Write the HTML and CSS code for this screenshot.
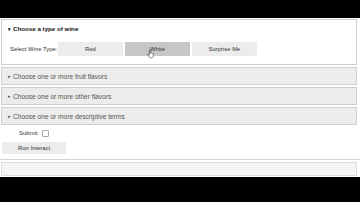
FILE: index.html
```html
<!DOCTYPE html>
<html>
<head>
<meta charset="utf-8">
<link rel="stylesheet" href="styles.css">
</head>
<body>
<div class="topbar"></div>
<main class="content">
  <section class="panel open">
    <div class="panel-title bold"><span class="caret">▾</span>Choose a type of wine</div>
    <div class="panel-body">
      <span class="label">Select Wine Type:</span>
      <div class="toggles">
        <button class="tbtn">Red</button>
        <button class="tbtn active">White<svg class="cursor" viewBox="0 0 10 12" width="8" height="10"><path d="M3 1.2 C3 0.6 4 0.6 4 1.2 V5 L4.3 4.6 C4.6 4 5.4 4.1 5.5 4.8 C5.8 4.3 6.6 4.4 6.7 5.1 C7 4.7 7.8 4.8 7.8 5.5 V8 C7.8 9.6 7 10.8 5.6 10.8 H4.6 C3.6 10.8 3 10.2 2.4 9.2 L1 6.9 C0.7 6.3 1.4 5.8 1.9 6.3 L3 7.4 Z" fill="#fff" stroke="#222" stroke-width="0.7"/></svg></button>
        <button class="tbtn">Surprise Me</button>
      </div>
    </div>
  </section>
  <section class="panel closed"><div class="panel-title"><span class="caret">▸</span>Choose one or more fruit flavors</div></section>
  <section class="panel closed"><div class="panel-title"><span class="caret">▸</span>Choose one or more other flavors</div></section>
  <section class="panel closed"><div class="panel-title"><span class="caret">▸</span>Choose one or more descriptive terms</div></section>
  <div class="submit-row"><span>Submit</span><span class="checkbox"></span></div>
  <button class="run">Run Interact</button>
</main>
<div class="separator"></div>
<div class="output"></div>
<div class="bottombar"></div>
</body>
</html>
```
FILE: styles.css
```css
html, body {
  margin: 0;
  padding: 0;
  background: #fff;
  font-family: "Liberation Sans", Arial, sans-serif;
  font-size: 6.6px;
  color: #222;
}
body {
  width: 360px;
  height: 202px;
  display: flex;
  flex-direction: column;
  overflow: hidden;
}
.topbar {
  height: 18px;
  background: #000;
  flex: none;
}
.content {
  display: flex;
  flex-direction: column;
  gap: 2px;
  padding: 1px 2px 0 1px;
}
.panel {
  border: 1px solid #cfcfcf;
  box-sizing: border-box;
  width: 356px;
}
.panel.open {
  background: #fff;
  height: 46px;
}
.panel.closed {
  background: #ececec;
  height: 18px;
}
.panel-title {
  height: 16px;
  display: flex;
  align-items: center;
  padding-left: 6px;
  color: #333;
}
.panel.open .panel-title {
  height: 17px;
}
.panel.closed .panel-title {
  color: #555;
}
.bold {
  font-weight: bold;
  font-size: 6.2px;
  color: #111;
}
.caret {
  font-size: 5px;
  margin-right: 2px;
  display: inline-block;
  width: 3px;
}
.panel-body {
  display: flex;
  align-items: center;
  padding: 5px 0 0 8px;
  font-size: 5.9px;
}
.label {
  flex: none;
  width: 48px;
  white-space: nowrap;
  color: #333;
}
.toggles {
  display: flex;
  gap: 2px;
}
.tbtn {
  width: 65px;
  height: 14px;
  border: none;
  background: #ececec;
  font: inherit;
  color: #333;
  padding: 0;
  position: relative;
}
.tbtn.active {
  background: #c6c6c6;
}
.cursor {
  position: absolute;
  left: 22px;
  top: 7px;
}
.submit-row {
  display: flex;
  align-items: center;
  gap: 4px;
  padding-left: 18px;
  height: 12px;
  font-size: 6px;
  color: #333;
}
.checkbox {
  width: 5px;
  height: 5px;
  border: 1px solid #aaa;
  border-radius: 1px;
}
.run {
  width: 64px;
  height: 12px;
  margin: 1px 0 0 1px;
  border: none;
  background: #ececec;
  font: inherit;
  font-size: 5.9px;
  color: #333;
  padding: 0;
}
.separator {
  height: 1px;
  background: #d4d4d4;
  margin-top: 5px;
  flex: none;
}
.output {
  height: 14px;
  box-sizing: border-box;
  margin: 2px 3px 0 1px;
  border: 1px solid #dcdcdc;
  background: #f4f4f4;
  flex: none;
}
.bottombar {
  flex: 1;
  background: #000;
  margin-top: 1px;
}
```
